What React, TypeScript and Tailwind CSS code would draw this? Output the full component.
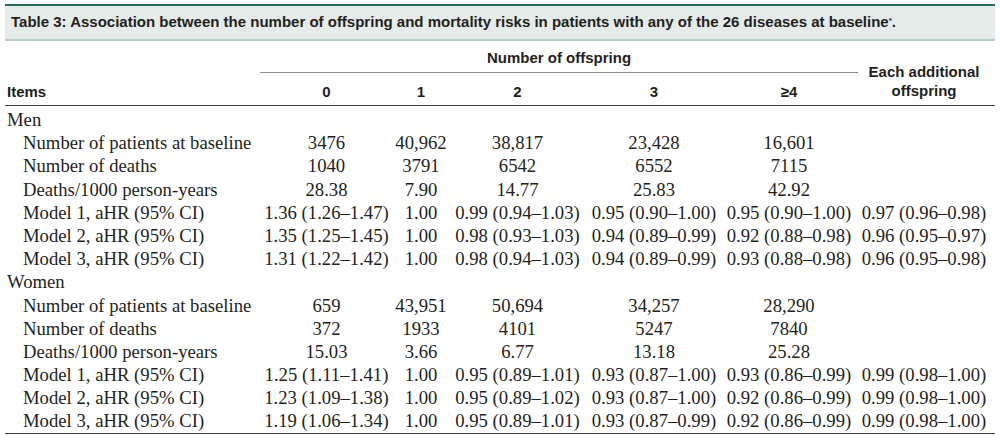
const cols = "grid grid-cols-[253px_137px_52px_141px_132px_138px_132px]";

type Row = { label: string; cells: string[] };

const men: Row[] = [
  { label: "Number of patients at baseline", cells: ["3476", "40,962", "38,817", "23,428", "16,601", ""] },
  { label: "Number of deaths", cells: ["1040", "3791", "6542", "6552", "7115", ""] },
  { label: "Deaths/1000 person-years", cells: ["28.38", "7.90", "14.77", "25.83", "42.92", ""] },
  {
    label: "Model 1, aHR (95% CI)",
    cells: ["1.36 (1.26–1.47)", "1.00", "0.99 (0.94–1.03)", "0.95 (0.90–1.00)", "0.95 (0.90–1.00)", "0.97 (0.96–0.98)"],
  },
  {
    label: "Model 2, aHR (95% CI)",
    cells: ["1.35 (1.25–1.45)", "1.00", "0.98 (0.93–1.03)", "0.94 (0.89–0.99)", "0.92 (0.88–0.98)", "0.96 (0.95–0.97)"],
  },
  {
    label: "Model 3, aHR (95% CI)",
    cells: ["1.31 (1.22–1.42)", "1.00", "0.98 (0.94–1.03)", "0.94 (0.89–0.99)", "0.93 (0.88–0.98)", "0.96 (0.95–0.98)"],
  },
];

const women: Row[] = [
  { label: "Number of patients at baseline", cells: ["659", "43,951", "50,694", "34,257", "28,290", ""] },
  { label: "Number of deaths", cells: ["372", "1933", "4101", "5247", "7840", ""] },
  { label: "Deaths/1000 person-years", cells: ["15.03", "3.66", "6.77", "13.18", "25.28", ""] },
  {
    label: "Model 1, aHR (95% CI)",
    cells: ["1.25 (1.11–1.41)", "1.00", "0.95 (0.89–1.01)", "0.93 (0.87–1.00)", "0.93 (0.86–0.99)", "0.99 (0.98–1.00)"],
  },
  {
    label: "Model 2, aHR (95% CI)",
    cells: ["1.23 (1.09–1.38)", "1.00", "0.95 (0.89–1.02)", "0.93 (0.87–1.00)", "0.92 (0.86–0.99)", "0.99 (0.98–1.00)"],
  },
  {
    label: "Model 3, aHR (95% CI)",
    cells: ["1.19 (1.06–1.34)", "1.00", "0.95 (0.89–1.01)", "0.93 (0.87–0.99)", "0.92 (0.86–0.99)", "0.99 (0.98–1.00)"],
  },
];

function Group({ title, rows }: { title: string; rows: Row[] }) {
  return (
    <>
      <div className={`${cols} h-[23.2px] items-center`}>
        <div className="pl-[2px]">{title}</div>
      </div>
      {rows.map((r) => (
        <div key={title + r.label} className={`${cols} h-[23.2px] items-center`}>
          <div className="pl-[18px] whitespace-nowrap">{r.label}</div>
          {r.cells.map((c, i) => (
            <div key={i} className="text-center whitespace-nowrap">
              {c}
            </div>
          ))}
        </div>
      ))}
    </>
  );
}

export default function App() {
  const head = "font-['Liberation_Sans',Arial,sans-serif] font-bold text-[15px] text-[#231f20]";

  return (
    <div className="w-[1000px] h-[436px] bg-white px-[5px] pt-[4px] overflow-hidden">
      {/* Caption bar */}
      <div
        className={`${head} h-[37px] flex items-center pl-[6px] bg-[#e5ebe8] border-t-2 border-[#1d7351] border-b-2 border-b-[#b7d2c4]`}
      >
        Table 3: Association between the number of offspring and mortality risks in patients with any of the 26 diseases at baseline
        <sup className="text-[8px] relative -top-[2px]">*</sup>.
      </div>

      {/* Column heads */}
      <div className={`${head} ${cols} grid-rows-[32px_32px] border-b-[1.5px] border-[#3f3f3f]`}>
        <div className="row-span-2 flex items-end pb-[5px] pl-[2px] leading-[17px]">Items</div>
        <div className="col-span-5 flex items-end justify-center pb-[6px] leading-[17px] ml-[2px] border-b-[1.5px] border-[#8e8e8e]">
          Number of offspring
        </div>
        <div className="row-span-2 col-start-7 flex flex-col items-center justify-end pb-[5px] leading-[19px]">
          <span>Each additional</span>
          <span>offspring</span>
        </div>
        {["0", "1", "2", "3", "≥4"].map((h) => (
          <div key={h} className="flex items-end justify-center pb-[5px] leading-[17px]">
            {h}
          </div>
        ))}
      </div>

      {/* Body */}
      <div className="font-['Liberation_Serif','Times_New_Roman',serif] text-[18.7px] leading-[23.2px] text-[#231f20] pt-[2px] border-b-[1.5px] border-[#3f3f3f]">
        <Group title="Men" rows={men} />
        <Group title="Women" rows={women} />
      </div>
    </div>
  );
}
